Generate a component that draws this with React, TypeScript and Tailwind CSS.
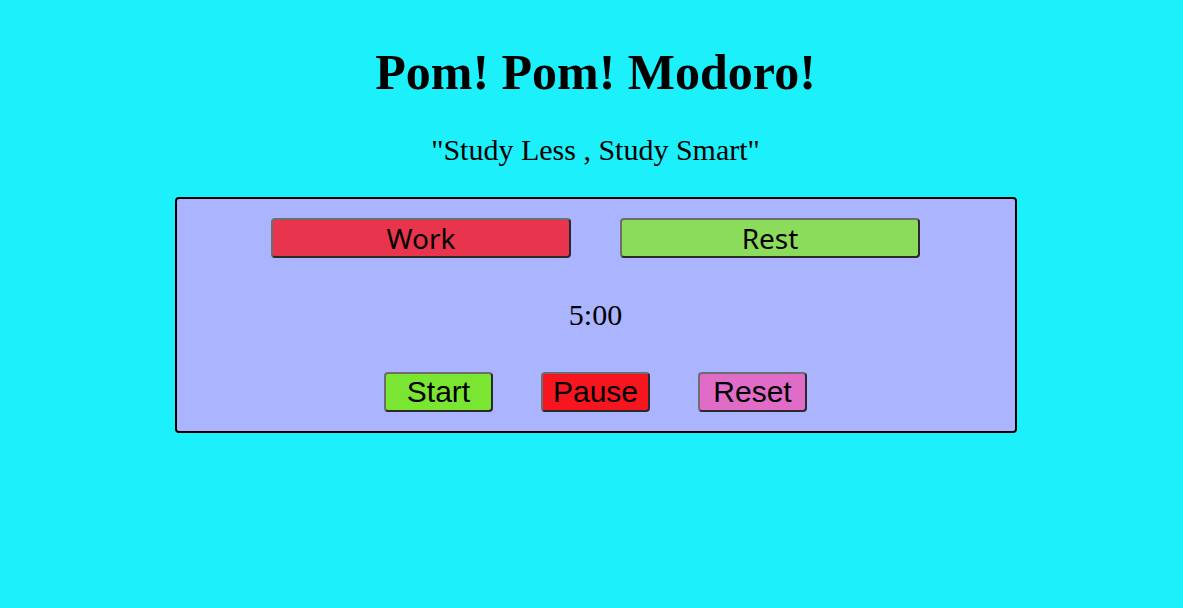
export default function App() {
  const btn = "h-[40px] border-2 border-[#6e6e6e] border-b-[#2a2a2a] border-r-[#2a2a2a] rounded-[4px] leading-none text-black";
  return (
    <div className="min-h-[608px] w-full bg-[#1cf0fb] flex flex-col items-center pl-[8px]" style={{ fontFamily: '"Liberation Serif", serif' }}>
      <h1 className="mt-[42px] text-[50px] leading-[60px] font-bold text-black">Pom! Pom! Modoro!</h1>
      <p className="mt-[31px] text-[30px] leading-[34px] text-black">"Study Less , Study Smart"</p>
      <div className="mt-[30px] w-[842px] h-[236px] border-2 border-black rounded-[4px] bg-[#abb4ff] flex flex-col items-center">
        <div className="mt-[19px] flex gap-[49px]">
          <button className={`${btn} w-[300px] bg-[#e8354d] text-[28px]`} style={{ fontFamily: '"Noto Sans", sans-serif' }}>Work</button>
          <button className={`${btn} w-[300px] bg-[#8cdc5c] text-[28px]`} style={{ fontFamily: '"Noto Sans", sans-serif' }}>Rest</button>
        </div>
        <div className="mt-[39px] text-[30px] leading-[36px] text-black">5:00</div>
        <div className="mt-[39px] flex gap-[48px]">
          <button className={`${btn} w-[109px] bg-[#7ae632] text-[30px]`} style={{ fontFamily: '"Liberation Sans", sans-serif' }}>Start</button>
          <button className={`${btn} w-[109px] bg-[#f7161f] text-[30px]`} style={{ fontFamily: '"Liberation Sans", sans-serif' }}>Pause</button>
          <button className={`${btn} w-[109px] bg-[#e06cc8] text-[30px]`} style={{ fontFamily: '"Liberation Sans", sans-serif' }}>Reset</button>
        </div>
      </div>
    </div>
  );
}
